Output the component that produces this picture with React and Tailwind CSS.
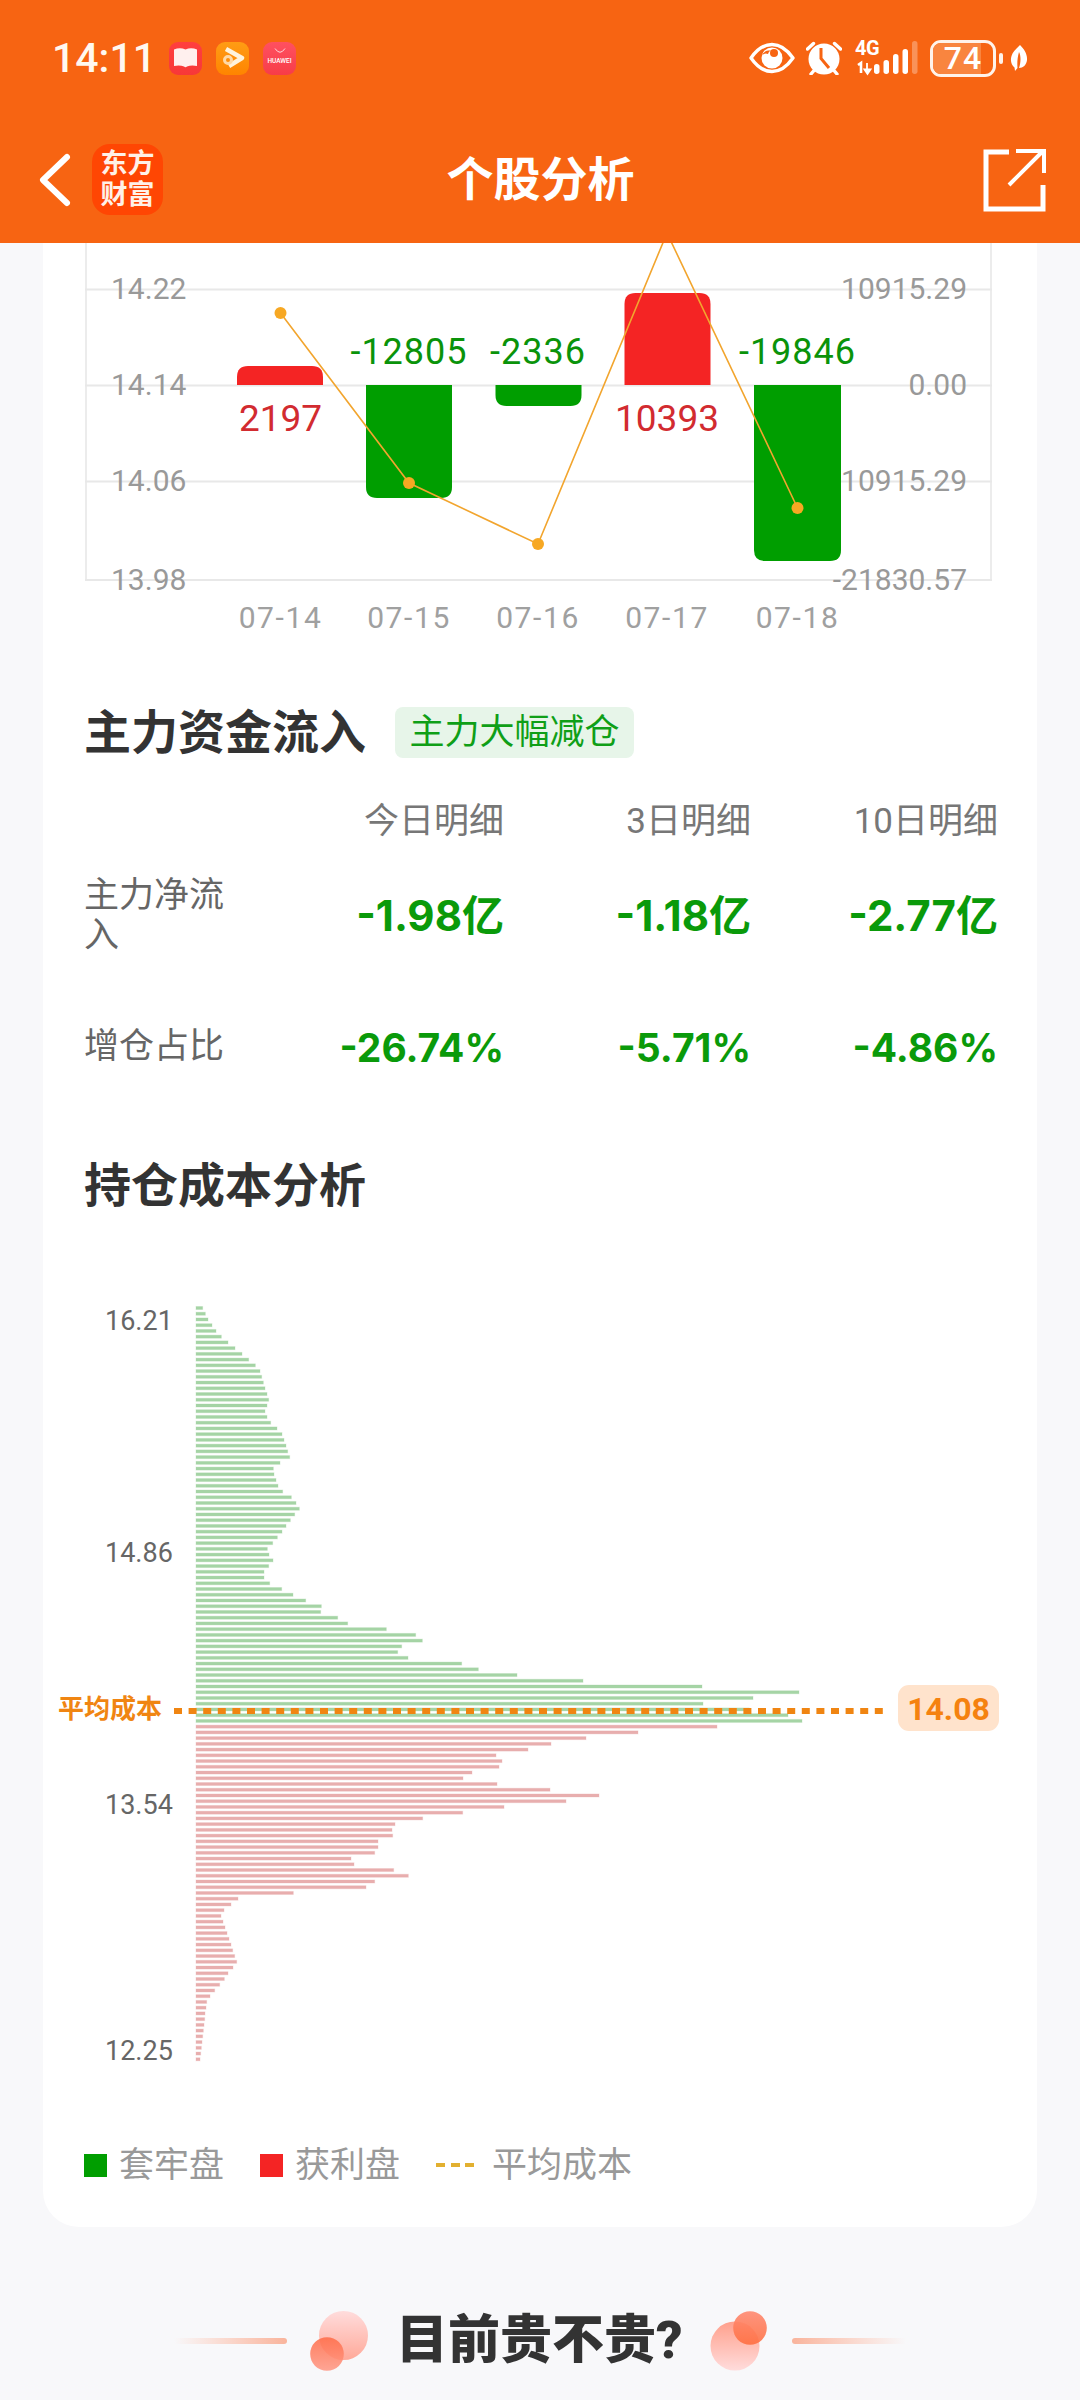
import React from "react";

const greenZ = [68,76,84,96,108,124,144,165,186,206,226,240,245,250,255,261,266,261,255,261,272,291,306,312,318,323,329,300,280,282,288,294,308,334,348,358,344,331,318,306,292,278,262,267,279,266,252,252,269,305,339,377,424,422,473,503,619,707,727,665,653,684,845,895,1011,1209,1566,1857,1719,1569,1707,1824,1866];
const redZ = [1611,1374,1218,1113,1044,948,966,957,876,849,951,1110,1257,1158,972,848,728,645,636,638,594,594,584,513,522,641,685,584,558,340,174,153,132,123,129,135,141,147,153,158,164,170,159,144,133,119,104,90,80,78,75,74,72,70,68,66,64,62,60];

function barPath(x, w, y0, y1, r) {
  if (y1 < y0) {
    return `M${x} ${y0}V${y1 + r}Q${x} ${y1} ${x + r} ${y1}H${x + w - r}Q${x + w} ${y1} ${x + w} ${y1 + r}V${y0}Z`;
  }
  return `M${x} ${y0}V${y1 - r}Q${x} ${y1} ${x + r} ${y1}H${x + w - r}Q${x + w} ${y1} ${x + w} ${y1 - r}V${y0}Z`;
}

function FlowChart() {
  const grid = [289.5, 385.5, 481.5, 580];
  const left = ["14.22", "14.14", "14.06", "13.98"];
  const right = ["10915.29", "0.00", "10915.29", "-21830.57"];
  const cols = [280.5, 409, 538, 667, 797.5];
  const dates = ["07-14", "07-15", "07-16", "07-17", "07-18"];
  const pts = [[280.5, 313], [409, 483], [538, 544], [667, 233], [797.5, 508]];
  return (
    <svg width="994" height="400" viewBox="43 243 994 400" className="block">
      <line x1="86" y1="243" x2="86" y2="580" stroke="#ececec" strokeWidth="2" />
      <line x1="991" y1="243" x2="991" y2="580" stroke="#ececec" strokeWidth="2" />
      {grid.map((y) => (
        <line key={y} x1="85" y1={y} x2="992" y2={y} stroke="#e8e8e8" strokeWidth="2" />
      ))}
      {left.map((t, i) => (
        <text key={t} x="111" y={grid[i] - 1} dominantBaseline="central" fontSize="30" fill="#999999">{t}</text>
      ))}
      {right.map((t, i) => (
        <text key={i} x="967" y={grid[i] - 1} textAnchor="end" dominantBaseline="central" fontSize="30" fill="#999999">{t}</text>
      ))}
      <path d={barPath(237, 86, 385, 366, 11)} fill="#f42424" />
      <path d={barPath(366, 86, 385, 498, 11)} fill="#009e00" />
      <path d={barPath(495.5, 86, 385, 406, 11)} fill="#009e00" />
      <path d={barPath(624.5, 86, 385, 293, 11)} fill="#f42424" />
      <path d={barPath(754, 87, 385, 561, 11)} fill="#009e00" />
      <polyline points={pts.map((p) => p.join(",")).join(" ")} fill="none" stroke="#f2a52e" strokeWidth="1.6" />
      {pts.map((p, i) => (
        <circle key={i} cx={p[0]} cy={p[1]} r="6" fill="#f7a823" />
      ))}
      <text x="409" y="352" textAnchor="middle" dominantBaseline="central" fontSize="36" letterSpacing="1" fill="#0a930a">-12805</text>
      <text x="538" y="352" textAnchor="middle" dominantBaseline="central" fontSize="36" letterSpacing="1" fill="#0a930a">-2336</text>
      <text x="797.5" y="352" textAnchor="middle" dominantBaseline="central" fontSize="36" letterSpacing="1" fill="#0a930a">-19846</text>
      <text x="280.5" y="418" textAnchor="middle" dominantBaseline="central" fontSize="37" fill="#d22b30">2197</text>
      <text x="667" y="418" textAnchor="middle" dominantBaseline="central" fontSize="37" fill="#d22b30">10393</text>
      {dates.map((d, i) => (
        <text key={d} x={cols[i]} y="617" textAnchor="middle" dominantBaseline="central" fontSize="30" letterSpacing="1.6" fill="#a0a0a0">{d}</text>
      ))}
    </svg>
  );
}

function CostChart() {
  const P = 5.735;
  return (
    <svg width="994" height="780" viewBox="43 1290 994 780" className="block">
      {greenZ.map((z, i) => (
        <rect key={"g" + i} x="196" y={1307 + i * P - 1.5} width={z / 3 - 16} height="3" fill="#a5d4a5" stroke="#a5d4a5" strokeOpacity="0.3" strokeWidth="1" />
      ))}
      {redZ.map((z, i) => (
        <rect key={"r" + i} x="196" y={1307 + (i + 73) * P - 1.5} width={z / 3 - 16} height="3" fill="#e8aeae" stroke="#e8aeae" strokeOpacity="0.3" strokeWidth="1" />
      ))}
      <line x1="174" y1="1710" x2="888" y2="1710" stroke="#f08512" strokeWidth="6" strokeDasharray="8 6.6" />
      <text x="58" y="1708" dominantBaseline="central" fontSize="26" fontWeight="700" fill="#f08512">平均成本</text>
      <rect x="898" y="1684" width="101" height="46" rx="11" fill="#ffe3cc" />
      <text x="948.5" y="1708" textAnchor="middle" dominantBaseline="central" fontSize="32" fontWeight="700" fill="#f5820f">14.08</text>
      <text x="105" y="1320" dominantBaseline="central" fontSize="27" fill="#666666">16.21</text>
      <text x="105" y="1552" dominantBaseline="central" fontSize="27" fill="#666666">14.86</text>
      <text x="105" y="1804" dominantBaseline="central" fontSize="27" fill="#666666">13.54</text>
      <text x="105" y="2050" dominantBaseline="central" fontSize="27" fill="#666666">12.25</text>
    </svg>
  );
}

function EyeIcon() {
  return (
    <svg width="46" height="32" viewBox="0 0 46 32">
      <path d="M2 16C9 6 16 2.500 23 2.500S37 6 44 16C37 26 30 29.500 23 29.500S9 26 2 16Z" fill="none" stroke="#fff" strokeWidth="3.400" strokeLinejoin="round" />
      <circle cx="23" cy="16" r="10.500" fill="#fff" />
      <path d="M19 8.500a8 8 0 0 0 -6 5a5.500 5.500 0 0 1 6 -1.500a5 5 0 0 1 3 -3.500Z" fill="#f76412" />
      <circle cx="25" cy="11" r="4" fill="#f76412" />
    </svg>
  );
}

function AlarmIcon() {
  return (
    <svg width="36" height="34" viewBox="0 0 36 34">
      <circle cx="18" cy="18" r="15.500" fill="#fff" />
      <path d="M1.500 8L7.500 2.500M34.500 8L28.500 2.500M8 29.500L5 33M28 29.500L31 33" stroke="#fff" strokeWidth="3.400" strokeLinecap="round" />
      <path d="M15 7V17.500L23 27" fill="none" stroke="#f76412" strokeWidth="3" />
    </svg>
  );
}

function NetworkIcon() {
  return (
    <div className="relative h-[36px] w-[62px]">
      <span className="absolute left-[-1px] top-[-2px] text-[20px] font-bold leading-[20px] tracking-[-0.5px] text-white">4G</span>
      <svg width="62" height="36" viewBox="0 0 62 36" className="absolute left-0 top-0">
        <path d="M2 25L5 23V33" fill="none" stroke="#fff" strokeWidth="2.600" />
        <path d="M11 23V31M8.500 29.500L11.500 34L14.500 29.500Z" fill="#fff" stroke="#fff" strokeWidth="1.800" />
        <rect x="18" y="24" width="5.500" height="10" rx="2.700" fill="#fff" />
        <rect x="27.500" y="20" width="5.500" height="14" rx="2.700" fill="#fff" />
        <rect x="37" y="14" width="5.500" height="20" rx="2.700" fill="#fff" />
        <rect x="46.500" y="9" width="5.500" height="25" rx="2.700" fill="#fff" />
        <rect x="56" y="1" width="5.500" height="33" rx="2.700" fill="#ffffff" fillOpacity="0.3" />
      </svg>
    </div>
  );
}

function Battery() {
  return (
    <div className="flex items-center gap-[3px]">
      <div className="relative flex h-[37px] w-[66px] items-center justify-center overflow-hidden rounded-[11px] border-[3px] border-[#fff3ea]">
        <div className="absolute bottom-0 left-0 top-0 w-[48px] bg-[#f9853f]" />
        <span className="relative text-[32px] font-medium leading-none tracking-[1px] text-white">74</span>
      </div>
      <div className="h-[11px] w-[4px] rounded-[2px] bg-[#fff3ea]" />
    </div>
  );
}

function LeafIcon() {
  return (
    <svg width="18" height="28" viewBox="0 0 18 28">
      <path d="M10 1C14 5 17.500 10 17 16C16.500 21 13 24 9 24C11 18 11 12 9 8C7.500 13 7 19 7.500 24L5 27L4.500 23.500C1.500 21 0 17 1.500 12C3 7 7 4 10 1Z" fill="#fff" />
    </svg>
  );
}

function StatusBar() {
  return (
    <div className="flex h-[116px] items-center pl-[52px] pr-[52px]">
      <span className="w-[99px] whitespace-nowrap text-[41px] font-medium leading-none text-[#fff8f0]">14:11</span>
      <div className="ml-[18px] flex gap-[14px]">
        <div className="flex h-[33px] w-[33px] items-center justify-center rounded-[9px] bg-gradient-to-b from-[#ff3f3f] to-[#f73838]">
          <svg width="25" height="22" viewBox="0 0 25 22">
            <path d="M1 2.500Q7 0 12.500 2.500Q18 0 24 2.500V19Q18 18 14 19.500Q12.500 21 11 19.500Q7 18 1 19Z" fill="#fff0ee" />
          </svg>
        </div>
        <div className="flex h-[33px] w-[33px] items-center justify-center rounded-[9px] bg-gradient-to-b from-[#ff9c14] to-[#ff8400]">
          <svg width="24" height="24" viewBox="0 0 24 24">
            <path d="M5 3L21 12L8 20" fill="none" stroke="#fff3dc" strokeWidth="4.500" strokeLinejoin="round" />
            <circle cx="7" cy="14" r="3.500" fill="none" stroke="#ffd9a6" strokeWidth="3" />
          </svg>
        </div>
        <div className="flex h-[33px] w-[33px] flex-col items-center rounded-[9px] bg-gradient-to-b from-[#ff5060] to-[#f73c48]">
          <svg width="14" height="9" viewBox="0 0 14 9" className="mt-[5px]">
            <path d="M2 1.500Q7 9 12 1.500" fill="none" stroke="#ffd8dc" strokeWidth="1" />
          </svg>
          <span className="mt-[1px] text-[6.500px] font-medium leading-[8px] text-white">HUAWEI</span>
        </div>
      </div>
      <div className="ml-auto flex items-center">
        <EyeIcon />
        <div className="ml-[11px]"><AlarmIcon /></div>
        <div className="ml-[14px]"><NetworkIcon /></div>
        <div className="ml-[12px]"><Battery /></div>
        <div className="ml-[7px]"><LeafIcon /></div>
      </div>
    </div>
  );
}

function NavBar() {
  return (
    <div className="flex h-[127px] items-center">
      <div className="flex flex-1 items-center pl-[37px]">
        <svg width="36" height="56" viewBox="0 0 36 56">
          <path d="M30 5L6 28L30 51" fill="none" stroke="#fff" strokeWidth="6" strokeLinecap="round" strokeLinejoin="round" />
        </svg>
        <div className="ml-[19px] flex h-[71px] w-[71px] flex-col items-center justify-center rounded-[18px] bg-[#ff4603] text-[27px] font-bold leading-[31px] text-[#fff1e8]">
          <span>东方</span>
          <span>财富</span>
        </div>
      </div>
      <span className="mr-[4px] text-[47px] font-bold leading-none text-white">个股分析</span>
      <div className="flex flex-1 justify-end pr-[32px]">
        <svg width="66" height="66" viewBox="0 0 66 66">
          <path d="M27 5H4V62H61V38" fill="none" stroke="#fff" strokeWidth="5" />
          <path d="M27 38L60 5M34 4H62V26" fill="none" stroke="#fff" strokeWidth="4" />
        </svg>
      </div>
    </div>
  );
}

function TableRow({ label, values, tall, big }) {
  return (
    <div className="grid h-[80px] grid-cols-[153px_267px_247px_247px] items-center">
      <span className={"text-[35px] leading-[40px] text-[#666666]" + (tall ? " w-[142px]" : "")}>{label}</span>
      {values.map((v) => (
        <span key={v} className={"text-right font-['Inter','Noto_Sans_CJK_SC',sans-serif] font-bold leading-none text-[#0a9a0a] " + (big ? "text-[42px]" : "text-[39px]")}>{v}</span>
      ))}
    </div>
  );
}

function MoneyFlow() {
  return (
    <div className="mt-[64px] px-[41px]">
      <div className="flex h-[51px] items-center">
        <h2 className="text-[47px] font-bold leading-none text-[#333333]">主力资金流入</h2>
        <span className="ml-[29px] flex h-[51px] w-[239px] items-center justify-center rounded-[8px] bg-[#e7f5e9] text-[35px] leading-none text-[#0f9f17]">主力大幅减仓</span>
      </div>
      <div className="mt-[44px] grid h-[40px] grid-cols-[153px_267px_247px_247px] items-center text-right text-[35px] leading-[40px] text-[#777777]">
        <span />
        <span>今日明细</span>
        <span>3日明细</span>
        <span>10日明细</span>
      </div>
      <div className="mt-[34px]">
        <TableRow tall big label="主力净流入" values={["-1.98亿", "-1.18亿", "-2.77亿"]} />
      </div>
      <div className="mt-[51px]">
        <TableRow label="增仓占比" values={["-26.74%", "-5.71%", "-4.86%"]} />
      </div>
    </div>
  );
}

function Legend() {
  return (
    <div className="mt-[74px] flex h-[40px] items-center pl-[41px] text-[35px] leading-none text-[#999999]">
      <div className="h-[23px] w-[23px] bg-[#009e00]" />
      <span className="ml-[12px]">套牢盘</span>
      <div className="ml-[36px] h-[23px] w-[23px] bg-[#f42424]" />
      <span className="ml-[12px]">获利盘</span>
      <div className="ml-[36px] flex w-[38px] justify-between">
        <div className="h-[4px] w-[9px] bg-[#e2b030]" />
        <div className="h-[4px] w-[9px] bg-[#e2b030]" />
        <div className="h-[4px] w-[9px] bg-[#e2b030]" />
      </div>
      <span className="ml-[18px]">平均成本</span>
    </div>
  );
}

function BubbleLeft() {
  return (
    <svg width="58" height="60" viewBox="0 0 58 60">
      <defs>
        <linearGradient id="la" x1="0" y1="0" x2="0" y2="1">
          <stop offset="0" stopColor="#ffdcdc" />
          <stop offset="1" stopColor="#ffa999" />
        </linearGradient>
        <linearGradient id="lb" x1="0" y1="0" x2="0" y2="1">
          <stop offset="0" stopColor="#ff6a45" stopOpacity="0.85" />
          <stop offset="1" stopColor="#ff9c8a" stopOpacity="0.9" />
        </linearGradient>
      </defs>
      <circle cx="33.500" cy="24.500" r="24.500" fill="url(#la)" />
      <circle cx="17" cy="43" r="16.800" fill="url(#lb)" />
    </svg>
  );
}

function BubbleRight() {
  return (
    <svg width="58" height="60" viewBox="0 0 58 60">
      <defs>
        <linearGradient id="ra" x1="0" y1="0" x2="0" y2="1">
          <stop offset="0" stopColor="#ffa08c" />
          <stop offset="1" stopColor="#ffdcdc" />
        </linearGradient>
        <linearGradient id="rb" x1="0" y1="0" x2="0" y2="1">
          <stop offset="0" stopColor="#ff8f78" stopOpacity="0.95" />
          <stop offset="1" stopColor="#ff6a3a" stopOpacity="0.85" />
        </linearGradient>
      </defs>
      <circle cx="25" cy="35" r="24.500" fill="url(#ra)" />
      <circle cx="40" cy="17" r="16.800" fill="url(#rb)" />
    </svg>
  );
}

function Footer() {
  return (
    <div className="mt-[84px] flex h-[60px] items-center justify-center">
      <div className="h-[6px] w-[113px] rounded-r-[3px] bg-gradient-to-r from-[#f8f8fa] to-[#f9b49c]" />
      <div className="ml-[23px]"><BubbleLeft /></div>
      <span className="ml-[28px] w-[285px] whitespace-nowrap text-[52px] font-black leading-none text-[#333333]">目前贵不贵?</span>
      <div className="ml-[29px]"><BubbleRight /></div>
      <div className="ml-[24px] h-[6px] w-[114px] rounded-l-[3px] bg-gradient-to-r from-[#f9b49c] to-[#f8f8fa]" />
    </div>
  );
}

export default function App() {
  return (
    <div lang="zh-CN" className="flex h-[2400px] w-[1080px] flex-col overflow-hidden bg-[#f8f8fa] font-['Roboto','Noto_Sans_CJK_SC',sans-serif]">
      <header className="h-[243px] shrink-0 bg-[#f76412]">
        <StatusBar />
        <NavBar />
      </header>
      <main className="mx-[43px] h-[1984px] w-[994px] shrink-0 rounded-b-[36px] bg-white">
        <FlowChart />
        <MoneyFlow />
        <h2 className="mt-[69px] px-[41px] text-[47px] font-bold leading-[60px] text-[#333333]">持仓成本分析</h2>
        <div className="mt-[75px]">
          <CostChart />
        </div>
        <Legend />
      </main>
      <Footer />
    </div>
  );
}
